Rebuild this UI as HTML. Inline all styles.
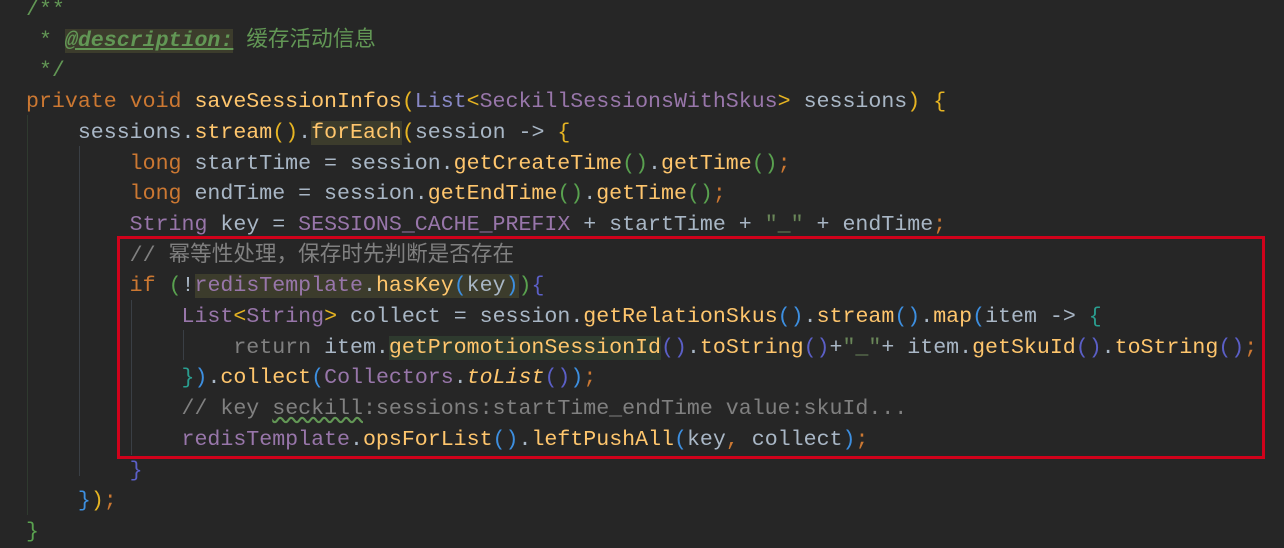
<!DOCTYPE html>
<html><head><meta charset="utf-8"><style>
html,body{margin:0;padding:0;background:#262626;width:1284px;height:538px;overflow:hidden}
#c{position:absolute;left:26px;top:-5px;font-family:"Liberation Mono","Noto Sans CJK SC",monospace;font-size:21.6px;line-height:30.7px;color:#a9b7c6;white-space:pre}
.k{color:#cc7832}.m{color:#ffc66d}.d{color:#629755}.g{color:#808080}.p{color:#9876aa}.s{color:#6a8759}.l{color:#8888c6}
.b1{color:#e6b422}.b2{color:#59a14f}.b3{color:#3d8fe0}.b4{color:#5b5fc7}.b5{color:#2a9d8f}
.h{background:#3c3c2c}.h2{background:#2e3a2e}
.dl{text-decoration:underline;font-weight:bold;font-style:italic}
#box{position:absolute;left:117px;top:236px;width:1142px;height:217px;border:3px solid #d0021b}
.v{position:absolute;width:1px;background:#3a3f45}
</style></head><body>
<div class="v" style="left:27px;top:115px;height:400px;background:#2f3a2f"></div>
<div class="v" style="left:79px;top:146px;height:330px"></div>
<div class="v" style="left:131px;top:300px;height:155px"></div>
<div class="v" style="left:183px;top:330px;height:30px"></div>
<div id="c"><span class="d">/**</span>
<span class="d"> * <span class="h dl">@description:</span> 缓存活动信息</span>
<span class="d"> */</span>
<span class="k">private void </span><span class="m">saveSessionInfos</span><span class="b1">(</span><span class="l">List</span><span class="b1">&lt;</span><span class="p">SeckillSessionsWithSkus</span><span class="b1">&gt;</span> sessions<span class="b1">)</span> <span class="b1">{</span>
    sessions.<span class="m">stream</span><span class="b1">()</span>.<span class="m h">forEach</span><span class="b1">(</span>session -&gt; <span class="b1">{</span>
        <span class="k">long </span>startTime = session.<span class="m">getCreateTime</span><span class="b2">()</span>.<span class="m">getTime</span><span class="b2">()</span><span class="k">;</span>
        <span class="k">long </span>endTime = session.<span class="m">getEndTime</span><span class="b2">()</span>.<span class="m">getTime</span><span class="b2">()</span><span class="k">;</span>
        <span class="p">String</span> key = <span class="p">SESSIONS_CACHE_PREFIX</span> + startTime + <span class="s">"_"</span> + endTime<span class="k">;</span>
        <span class="g">// 幂等性处理，保存时先判断是否存在</span>
        <span class="k">if </span><span class="b2">(</span>!<span class="h"><span class="p">redisTemplate</span>.<span class="m">hasKey</span><span class="b3">(</span>key<span class="b3">)</span></span><span class="b2">)</span><span class="b4">{</span>
            <span class="p">List</span><span class="b1">&lt;</span><span class="p">String</span><span class="b1">&gt;</span> collect = session.<span class="m">getRelationSkus</span><span class="b3">()</span>.<span class="m">stream</span><span class="b3">()</span>.<span class="m">map</span><span class="b3">(</span>item -&gt; <span class="b5">{</span>
                <span class="g">return</span> item.<span class="m h2">getPromotionSessionId</span><span class="b4">()</span>.<span class="m">toString</span><span class="b4">()</span>+<span class="s">"_"</span>+ item.<span class="m">getSkuId</span><span class="b4">()</span>.<span class="m">toString</span><span class="b4">()</span><span class="k">;</span>
            <span class="b5">}</span><span class="b3">)</span>.<span class="m">collect</span><span class="b3">(</span><span class="p">Collectors</span>.<span class="m" style="font-style:italic">toList</span><span class="b4">()</span><span class="b3">)</span><span class="k">;</span>
            <span class="g">// key <span style="text-decoration:underline wavy #629755">seckill</span>:sessions:startTime_endTime value:skuId...</span>
            <span class="p">redisTemplate</span>.<span class="m">opsForList</span><span class="b3">()</span>.<span class="m">leftPushAll</span><span class="b3">(</span>key<span class="k">,</span> collect<span class="b3">)</span><span class="k">;</span>
        <span class="b4">}</span>
    <span class="b3">}</span><span class="b1">)</span><span class="k">;</span>
<span class="b2">}</span></div>
<div id="box"></div>
</body></html>
